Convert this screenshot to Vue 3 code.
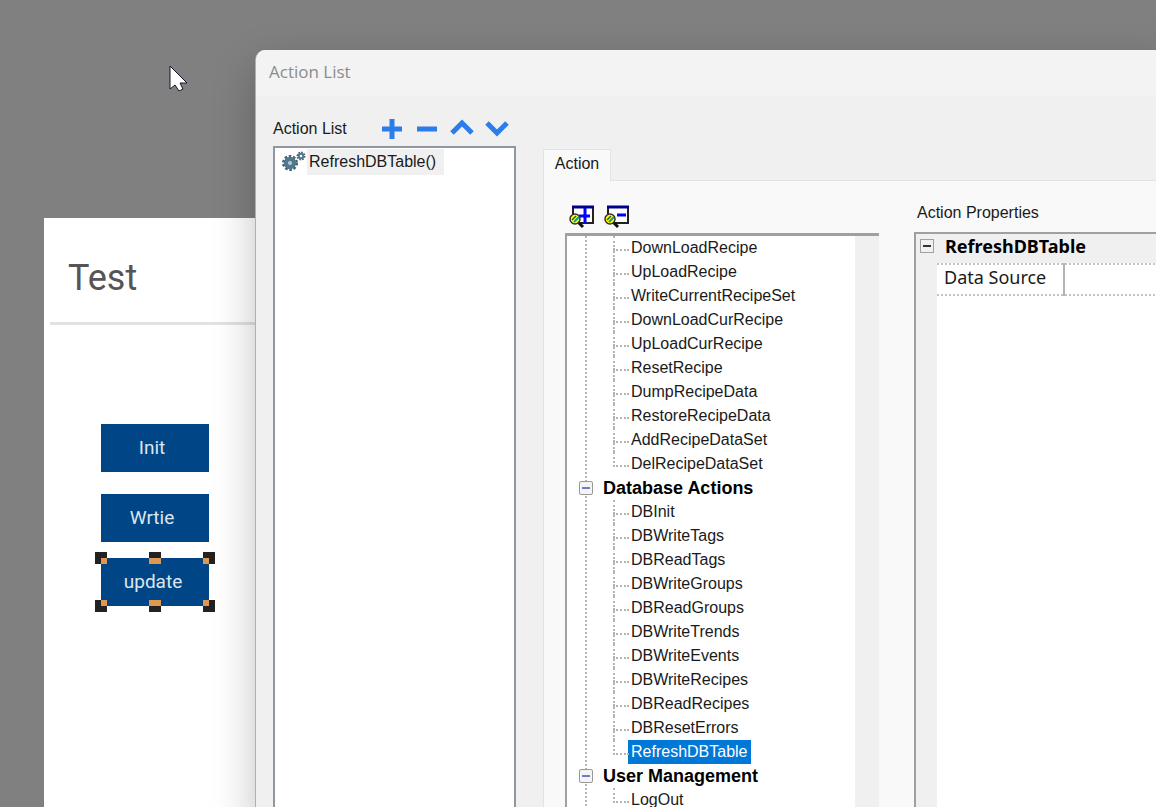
<script setup>
import { ref } from "vue";

const actions = ref(["RefreshDBTable()"]);
const selected = ref("RefreshDBTable");

const groups = [
  {
    name: "",
    items: [
      "DownLoadRecipe",
      "UpLoadRecipe",
      "WriteCurrentRecipeSet",
      "DownLoadCurRecipe",
      "UpLoadCurRecipe",
      "ResetRecipe",
      "DumpRecipeData",
      "RestoreRecipeData",
      "AddRecipeDataSet",
      "DelRecipeDataSet",
    ],
  },
  {
    name: "Database Actions",
    items: [
      "DBInit",
      "DBWriteTags",
      "DBReadTags",
      "DBWriteGroups",
      "DBReadGroups",
      "DBWriteTrends",
      "DBWriteEvents",
      "DBWriteRecipes",
      "DBReadRecipes",
      "DBResetErrors",
      "RefreshDBTable",
    ],
  },
  { name: "User Management", items: ["LogOut"] },
];

const tools = [
  { label: "Add", path: "M10 0v20M0 10h20" },
  { label: "Remove", path: "M0 10h20" },
  { label: "Move up", path: "M0 14L10 4L20 14" },
  { label: "Move down", path: "M0 4L10 14L20 4" },
];

const handles = ["tl", "tc", "tr", "bl", "bc", "br"];
</script>

<template>
  <div class="desktop">
    <section class="page">
      <h1>Test</h1>
      <div class="canvas">
        <button>Init</button>
        <button>Wrtie</button>
        <div class="picked">
          <button>update</button>
          <i v-for="h in handles" :key="h" :class="['handle', h]"></i>
        </div>
      </div>
    </section>

    <section class="dialog">
      <header class="titlebar">Action List</header>
      <div class="body">
        <div class="list-pane">
          <div class="list-head">
            <span>Action List</span>
            <button v-for="t in tools" :key="t.label" :aria-label="t.label">
              <svg viewBox="-2 0 24 20" width="24" height="20">
                <path :d="t.path" />
              </svg>
            </button>
          </div>
          <ul class="list">
            <li v-for="a in actions" :key="a">
              <svg class="gears" width="26" height="24" viewBox="0 0 26 24">
                <circle class="teeth" cx="9" cy="13" r="6.5" stroke-width="3" stroke-dasharray="2.4 1.7" />
                <circle class="ring" cx="9" cy="13" r="4" stroke-width="4.5" />
                <circle class="hub" cx="9" cy="13" r="1.8" />
                <circle class="teeth" cx="20" cy="6" r="3.5" stroke-width="2" stroke-dasharray="1.6 1.1" />
                <circle class="ring" cx="20" cy="6" r="2.3" stroke-width="2" />
              </svg>
              <span>{{ a }}</span>
            </li>
          </ul>
        </div>

        <div class="tabs">
          <div class="tabbar"><button>Action</button></div>
          <div class="panel">
            <div class="tree-pane">
              <div class="tree-tools">
                <button v-for="k in ['Expand all', 'Collapse all']" :key="k" :aria-label="k">
                  <svg width="25" height="24" viewBox="0 0 25 24">
                    <path d="M4 2h20v16H4z" fill="#fff" stroke="#222" stroke-width="2" />
                    <path d="M3 2h22" stroke="#00008b" stroke-width="3" />
                    <path d="M10 11h11" stroke="#00f" stroke-width="3" v-if="k === 'Expand all'" />
                    <path d="M13 10h9" stroke="#00f" stroke-width="3" v-else />
                    <path v-if="k === 'Expand all'" d="M16 3v15" stroke="#00f" stroke-width="3" />
                    <path d="M9 17l5 5" stroke="#111" stroke-width="3" />
                    <circle cx="6" cy="14" r="5" fill="#ff0" stroke="#333" stroke-width="1.5" />
                    <path d="M3 15l4-4" stroke="#444" stroke-width="1.5" />
                    <path d="M5 17l5-5" stroke="#00a0a0" stroke-width="2" />
                  </svg>
                </button>
              </div>
              <div class="tree">
                <div class="branches">
                  <template v-for="g in groups" :key="g.name">
                    <div v-if="g.name" class="group">
                      <button class="toggle" :aria-label="g.name"></button>
                      <b>{{ g.name }}</b>
                    </div>
                    <ul>
                      <li v-for="item in g.items" :key="item">
                        <span :class="{ active: item === selected }" @click="selected = item">{{ item }}</span>
                      </li>
                    </ul>
                  </template>
                </div>
              </div>
            </div>

            <div class="props-pane">
              <h2>Action Properties</h2>
              <div class="props">
                <div class="props-head">
                  <button class="fold" aria-label="Collapse"></button>
                  <b>RefreshDBTable</b>
                </div>
                <table>
                  <tbody>
                    <tr>
                      <th>Data Source</th>
                      <td></td>
                    </tr>
                  </tbody>
                </table>
              </div>
            </div>
          </div>
        </div>
      </div>
    </section>

    <svg class="cursor" width="20" height="28" viewBox="0 0 20 28">
      <path
        d="M1 1v23l5-4 4 6 4-2-3-6h7z"
        fill="#fff"
        stroke="#15152a"
        stroke-width="1"
      />
    </svg>
  </div>
</template>

<style>
body {
  margin: 0;
}
</style>

<style scoped>
* {
  box-sizing: border-box;
}
button {
  margin: 0;
  padding: 0;
  border: 0;
  background: none;
  font: inherit;
  color: inherit;
}
ul {
  margin: 0;
  padding: 0;
  list-style: none;
}
svg {
  display: block;
}
.desktop {
  position: relative;
  height: 100vh;
  overflow: hidden;
  background: #808080;
  font-family: "Liberation Sans", sans-serif;
  font-size: 16px;
  color: #1a1a1a;
}

/* edited screen */
.page {
  position: absolute;
  top: 218px;
  left: 44px;
  bottom: 0;
  width: 50%;
  background: #fff;
  font-family: Roboto, sans-serif;

  h1 {
    margin: 0 6px;
    padding: 0 18px;
    height: 107px;
    line-height: 120px;
    font-size: 36px;
    font-weight: 400;
    color: #555;
    border-bottom: 3px solid #e2e2e2;
  }
}
.canvas {
  display: flex;
  flex-direction: column;
  align-items: flex-start;
  padding: 99px 57px;

  button {
    width: 108px;
    height: 48px;
    margin-bottom: 22px;
    padding: 0 6px 2px 0;
    background: #004687;
    color: #dce6ef;
    font-size: 19px;
  }
}
.picked {
  position: relative;
  margin-top: -6px;

  button {
    display: block;
    margin: 0;
    padding-right: 4px;
  }
}
.handle {
  position: absolute;
  width: 12px;
  height: 12px;
  background: #222;

  &::after {
    content: "";
    position: absolute;
    width: 6px;
    height: 6px;
    background: #df9751;
  }
  &.tl,
  &.tc,
  &.tr {
    top: -6px;
  }
  &.bl,
  &.bc,
  &.br {
    bottom: -6px;
  }
  &.tl,
  &.bl {
    left: -6px;
  }
  &.tr,
  &.br {
    right: -6px;
  }
  &.tc,
  &.bc {
    left: 48px;
  }
  &.tc::after,
  &.bc::after {
    width: 12px;
  }
  &.tl::after,
  &.tc::after,
  &.tr::after {
    bottom: 0;
  }
  &.tl::after,
  &.bl::after {
    right: 0;
  }
}

/* dialog */
.dialog {
  position: absolute;
  top: 50px;
  left: 255px;
  right: -20px;
  bottom: -20px;
  display: flex;
  flex-direction: column;
  overflow: hidden;
  border-left: 1px solid #b0b0b0;
  border-radius: 10px 0 0 0;
  background: #f0f0f0;
  box-shadow: 0 16px 44px rgba(0, 0, 0, 0.24);
}
.titlebar {
  height: 46px;
  padding-left: 13px;
  line-height: 44px;
  background: #f3f3f3;
  color: #8c8c8c;
  font-family: "Open Sans", sans-serif;
  font-size: 17px;
}
.body {
  flex: 1;
  display: flex;
  gap: 27px;
  min-height: 0;
  padding-left: 17px;
}
.list-pane {
  display: flex;
  flex-direction: column;
  width: 243px;
}
.list-head {
  display: flex;
  align-items: center;
  gap: 11px;
  height: 50px;
  padding-top: 15px;

  span {
    width: 96px;
  }
  path {
    fill: none;
    stroke: #2b7de9;
    stroke-width: 5;
  }
}
.list {
  flex: 1;
  border: 2px solid #9197a0;
  background: #fff;

  li {
    display: flex;
    align-items: center;
    padding: 1px 6px;
  }
  span {
    padding: 0 8px 0 2px;
    line-height: 26px;
    background: #f0f0f0;
  }
}
.gears {
  circle {
    fill: none;
  }
  .teeth {
    stroke: #44616f;
  }
  .ring {
    stroke: #52788b;
  }
  .hub {
    fill: #a6c9d8;
  }
}
.tabs {
  flex: 1;
  display: flex;
  flex-direction: column;
  padding-top: 53px;
}
.tabbar button {
  display: block;
  width: 68px;
  height: 32px;
  margin-bottom: -1px;
  padding-bottom: 3px;
  position: relative;
  border: 1px solid #e2e2e2;
  border-bottom: 0;
  background: #f9f9f9;
}
.panel {
  flex: 1;
  display: flex;
  gap: 35px;
  min-height: 0;
  padding-left: 21px;
  border: 1px solid #e2e2e2;
  background: #f9f9f9;
}
.tree-pane {
  display: flex;
  flex-direction: column;
  width: 314px;
}
.tree-tools {
  display: flex;
  gap: 10px;
  height: 52px;
  padding: 20px 4px 0;
}
.tree {
  flex: 1;
  min-height: 0;
  overflow: hidden;
  padding-right: 24px;
  border-top: 3px solid #a0a0a0;
  border-left: 2px solid #a0a0a0;
  background: #f0f0f0;
}
.branches {
  position: relative;
  min-height: 100%;
  background: #fff;

  &::before {
    content: "";
    position: absolute;
    top: 0;
    bottom: 0;
    left: 18px;
    border-left: 2px dotted #b4b4b4;
  }
  ul {
    padding-left: 46px;
  }
  li {
    position: relative;
    display: flex;
    align-items: center;
    height: 24px;
    padding-left: 15px;
    line-height: 24px;

    &::before {
      content: "";
      position: absolute;
      top: 0;
      left: 0;
      width: 14px;
      height: 13px;
      border-left: 2px dotted #b4b4b4;
      border-bottom: 2px dotted #b4b4b4;
    }
    &:not(:last-child)::after {
      content: "";
      position: absolute;
      top: 12px;
      bottom: 0;
      left: 0;
      border-left: 2px dotted #b4b4b4;
    }
  }
  span {
    padding: 0 3px;
  }
  .active {
    background: #0078d7;
    color: #fff;
  }
}
.group {
  display: flex;
  align-items: center;
  gap: 10px;
  height: 24px;
  padding-left: 12px;
  position: relative;
  color: #000;
  font-size: 18px;
}
.toggle {
  display: grid;
  place-content: center;
  width: 14px;
  height: 14px;
  border: 1px solid #999;
  border-radius: 2px;
  background: #f4f4f4;

  &::after {
    content: "";
    width: 8px;
    height: 2px;
    background: #6a7fc4;
  }
}
.props-pane {
  flex: 1;
  display: flex;
  flex-direction: column;

  h2 {
    height: 51px;
    margin: 0;
    padding: 22px 3px 0;
    font-size: 16px;
    line-height: 20px;
    font-weight: 400;
  }
}
.props {
  flex: 1;
  padding-left: 21px;
  border-top: 2px solid #a0a0a0;
  border-left: 2px solid #a0a0a0;
  background: linear-gradient(to right, #f0f0f0 21px, #fff 21px);
  font-family: "Noto Sans", sans-serif;
  font-size: 18px;

  table {
    width: 100%;
    border-collapse: collapse;
  }
  th {
    width: 127px;
    height: 31px;
    padding: 0 0 4px 7px;
    line-height: 25px;
    text-align: left;
    font-weight: 400;
    border-right: 2px solid #b4b4b4;
  }
  tr {
    border-top: 2px dotted #c4c4c4;
    border-bottom: 2px dotted #c4c4c4;
  }
}
.props-head {
  display: flex;
  align-items: center;
  gap: 11px;
  height: 29px;
  margin-left: -21px;
  padding: 0 0 6px 4px;
  background: #f0f0f0;
  color: #000;
}
.fold {
  display: grid;
  place-content: center;
  width: 14px;
  height: 14px;
  border: 1px solid #a0a0a0;

  &::after {
    content: "";
    width: 8px;
    height: 2px;
    background: #333;
  }
}
.cursor {
  position: absolute;
  top: 65px;
  left: 169px;
}
</style>
